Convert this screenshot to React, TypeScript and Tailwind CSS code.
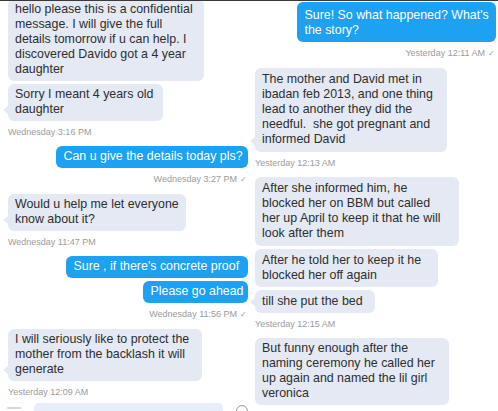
import React from 'react';

type Msg = {
  lines: string[];
  w: number;
  pad?: string;
  mt?: string;
  tail?: boolean;
};

const font = { fontFamily: '"Liberation Sans", Arial, sans-serif' };

const Tail = () => (
  <span className="absolute left-[-5px] bottom-[7px] w-0 h-0 border-y-[4px] border-y-transparent border-r-[5px] border-r-[#e4e9f4]" />
);

const Gray = ({ lines, w, pad = 'py-[3.5px]', mt = 'mt-[3px]', tail }: Msg) => (
  <div
    className={`relative ${mt} ${pad} px-[7px] rounded-[6px] bg-[#e4e9f4] text-[#2e2e2e] text-[12.4px] leading-[15px] whitespace-pre`}
    style={{ width: w }}
  >
    {lines.map((l, i) => (
      <div key={i}>{l}</div>
    ))}
    {tail && <Tail />}
  </div>
);

const Blue = ({ lines, w, pad = 'py-[3.5px]', mt = 'mt-[3px]' }: Msg) => (
  <div
    className={`self-end ${mt} ${pad} px-[7.5px] rounded-[6px] bg-[#1da1f2] text-white text-[12.4px] leading-[15px] whitespace-pre`}
    style={{ width: w }}
  >
    {lines.map((l, i) => (
      <div key={i}>{l}</div>
    ))}
  </div>
);

const Stamp = ({ text, right, check }: { text: string; right?: boolean; check?: boolean }) => (
  <div
    className={`mt-[5px] mb-[8px] text-[9px] leading-[12px] text-[#9b9b9b] whitespace-nowrap ${right ? 'self-end pr-[1px]' : ''}`}
  >
    {text}
    {check && <span className="ml-[3px] text-[8px]">✓</span>}
  </div>
);

export default function App() {
  return (
    <div className="w-[498px] h-[411px] overflow-hidden bg-white border-t border-[#3a3a3a] flex" style={font}>
      {/* left thread */}
      <div className="w-[250px] shrink-0 flex flex-col">
        <div className="flex flex-col pl-[8px] pr-[2px] mt-[-2.5px]">
          <Gray
            mt="mt-0"
            w={196}
            lines={[
              'hello please this is a confidential',
              'message. I will give the full',
              'details tomorrow if u can help. I',
              'discovered Davido got a 4 year',
              'daughter',
            ]}
          />
          <Gray w={155} tail lines={['Sorry I meant 4 years old', 'daughter']} />
          <Stamp text="Wednesday 3:16 PM" />
          <Blue mt="mt-0" w={192} lines={['Can u give the details today pls?']} />
          <Stamp text="Wednesday 3:27 PM" right check />
          <Gray mt="mt-0" w={178} tail lines={['Would u help me let everyone', 'know about it?']} />
          <Stamp text="Wednesday 11:47 PM" />
          <Blue mt="mt-0" w={182} lines={["Sure , if there's concrete proof"]} />
          <Blue w={105} lines={['Please go ahead']} />
          <Stamp text="Wednesday 11:56 PM" right check />
          <Gray
            mt="mt-0"
            w={194}
            tail
            lines={['I will seriously like to protect the', 'mother from the backlash it will', 'generate']}
          />
          <div className="mt-[5px] text-[9px] leading-[12px] text-[#9b9b9b]">Yesterday 12:09 AM</div>
        </div>
        <div className="h-px bg-[#f3dfe5] w-[248px]" />
        <div className="flex items-start mt-[5px] h-[20px]">
          <div className="ml-[7px] mt-[4px] w-[14px] h-[2px] rounded-full bg-[#d6d6d6]" />
          <div className="ml-[13px] w-[189px] h-[20px] rounded-[5px] bg-[#e8eef9]" />
          <div className="ml-[13px] mt-[2px] w-[12px] h-[12px] rounded-full border border-[#9a9a9a]" />
        </div>
      </div>

      {/* right thread */}
      <div className="flex-1 flex flex-col pl-[5px] pr-[2px] mt-[1px]">
        <Blue mt="mt-0" pad="pt-[5.5px] pb-[4px]" w={199} lines={["Sure! So what happened? What's", 'the story?']} />
        <Stamp text="Yesterday 12:11 AM" right check />
        <Gray
          mt="mt-0"
          pad="py-[4.5px]"
          w={192}
          tail
          lines={[
            'The mother and David met in',
            'ibadan feb 2013, and one thing',
            'lead to another they did the',
            'needful.  she got pregnant and',
            'informed David',
          ]}
        />
        <Stamp text="Yesterday 12:13 AM" />
        <Gray
          mt="mt-0"
          pad="py-[4.5px]"
          w={204}
          lines={[
            'After she informed him, he',
            'blocked her on BBM but called',
            'her up April to keep it that he will',
            'look after them',
          ]}
        />
        <Gray pad="py-[4px]" w={183} lines={['After he told her to keep it he', 'blocked her off again']} />
        <Gray pad="py-[4px]" w={120} tail lines={['till she put the bed']} />
        <Stamp text="Yesterday 12:15 AM" />
        <Gray
          mt="mt-0"
          w={194}
          lines={[
            'But funny enough after the',
            'naming ceremony he called her',
            'up again and named the lil girl',
            'veronica',
          ]}
        />
      </div>
    </div>
  );
}
